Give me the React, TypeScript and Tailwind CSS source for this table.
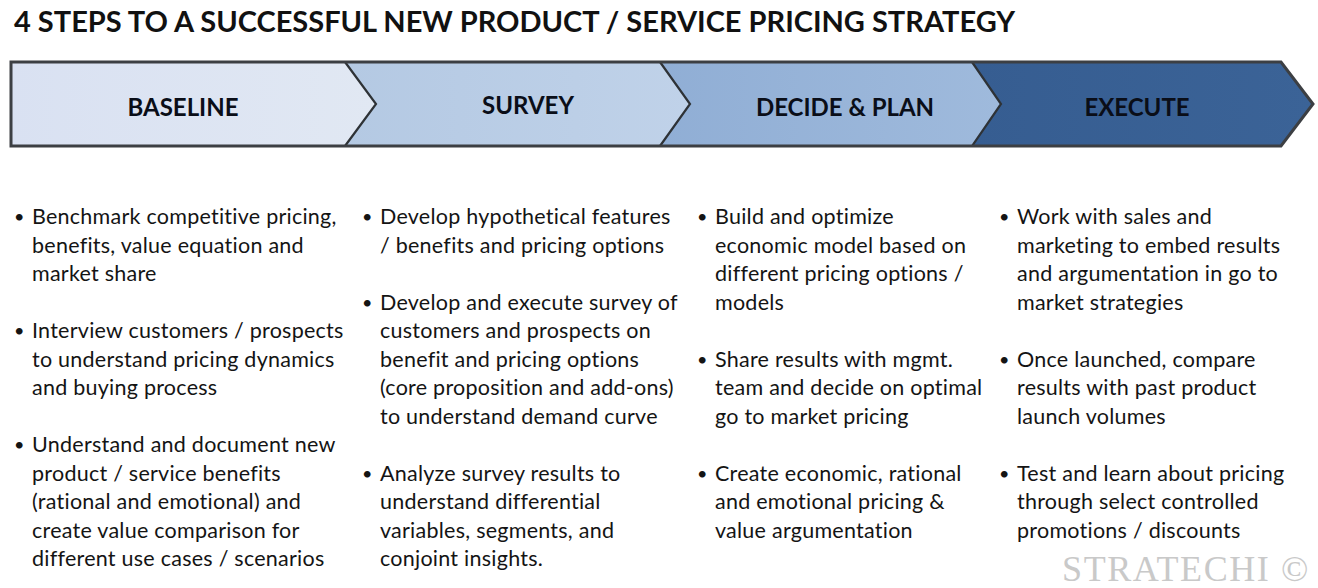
const steps = [
  { label: "BASELINE", width: "w-[344px]", pt: "pt-[3px]" },
  { label: "SURVEY", width: "w-[346px]", pt: "pt-0" },
  { label: "DECIDE & PLAN", width: "w-[288px]", pt: "pt-[4px]" },
  { label: "EXECUTE", width: "w-[296px]", pt: "pt-[4px]" },
];

const columns: string[][][] = [
  [
    ["Benchmark competitive pricing,", "benefits, value equation and", "market share"],
    ["Interview customers / prospects", "to understand pricing dynamics", "and buying process"],
    [
      "Understand and document new",
      "product / service benefits",
      "(rational and emotional) and",
      "create value comparison for",
      "different use cases / scenarios",
    ],
  ],
  [
    ["Develop hypothetical features", "/ benefits and pricing options"],
    [
      "Develop and execute survey of",
      "customers and prospects on",
      "benefit and pricing options",
      "(core proposition and add-ons)",
      "to understand demand curve",
    ],
    ["Analyze survey results to", "understand differential", "variables, segments, and", "conjoint insights."],
  ],
  [
    ["Build and optimize", "economic model based on", "different pricing options /", "models"],
    ["Share results with mgmt.", "team and decide on optimal", "go to market pricing"],
    ["Create economic, rational", "and emotional pricing &", "value argumentation"],
  ],
  [
    ["Work with sales and", "marketing to embed results", "and argumentation in go to", "market strategies"],
    ["Once launched, compare", "results with past product", "launch volumes"],
    ["Test and learn about pricing", "through select controlled", "promotions / discounts"],
  ],
];

const ChevronBar = () => (
  <div className="relative h-[90px] w-full">
    <svg className="absolute inset-0" width="1318" height="90" viewBox="0 0 1318 90">
      <defs>
        <linearGradient id="g1" x1="0" y1="0" x2="1" y2="0">
          <stop offset="0" stopColor="#d9e1f2" />
          <stop offset="1" stopColor="#e1e8f3" />
        </linearGradient>
        <linearGradient id="g2" x1="0" y1="0" x2="1" y2="0">
          <stop offset="0" stopColor="#b4c9e3" />
          <stop offset="1" stopColor="#c0d2e9" />
        </linearGradient>
        <linearGradient id="g3" x1="0" y1="0" x2="1" y2="0">
          <stop offset="0" stopColor="#90aed5" />
          <stop offset="1" stopColor="#9fbadc" />
        </linearGradient>
        <linearGradient id="g4" x1="0" y1="0" x2="1" y2="0">
          <stop offset="0" stopColor="#365d91" />
          <stop offset="1" stopColor="#3b6397" />
        </linearGradient>
      </defs>
      <polygon points="11,2 345,2 376,44 345,86 11,86" fill="url(#g1)" />
      <polygon points="345,2 660,2 690,44 660,86 345,86 376,44" fill="url(#g2)" />
      <polygon points="660,2 972,2 1001,44 972,86 660,86 690,44" fill="url(#g3)" />
      <polygon points="972,2 1281,2 1313,44 1281,86 972,86 1001,44" fill="url(#g4)" />
      <polyline points="345,2 376,44 345,86" fill="none" stroke="#2e3236" strokeWidth="2.2" />
      <polyline points="660,2 690,44 660,86" fill="none" stroke="#2e3236" strokeWidth="2.2" />
      <polyline points="972,2 1001,44 972,86" fill="none" stroke="#2e3236" strokeWidth="2.2" />
      <path
        d="M11 2 L1281 2 L1313 44 L1281 86 L11 86 Z"
        fill="none"
        stroke="#3c3f43"
        strokeWidth="3"
        strokeLinejoin="miter"
      />
    </svg>
    <div className="relative flex h-full pl-[11px]">
      {steps.map((s) => (
        <div
          key={s.label}
          className={`${s.width} ${s.pt} flex items-center justify-center text-[24px] font-bold text-[#0a0e18]`}
        >
          {s.label}
        </div>
      ))}
    </div>
  </div>
);

export default function App() {
  return (
    <div
      className="relative h-[588px] w-[1318px] overflow-hidden bg-white text-[#141414]"
      style={{ fontFamily: "Lato, 'Noto Sans', sans-serif" }}
    >
      <h1 className="pl-[14px] pt-[3px] text-[29px] font-bold leading-[36px] text-[#111]">
        4 STEPS TO A SUCCESSFUL NEW PRODUCT / SERVICE PRICING STRATEGY
      </h1>

      <div className="mt-[21px]">
        <ChevronBar />
      </div>

      <div className="mt-[52px] grid grid-cols-[348px_335px_302px_319px] pl-[14px] text-[21.5px] leading-[28.5px] tracking-[0.25px]">
        {columns.map((col, ci) => (
          <div key={ci} className="flex flex-col gap-[28.5px]">
            {col.map((lines, pi) => (
              <div key={pi} className="flex">
                <span className="w-[18px] shrink-0 text-[18px]">•</span>
                <p className="whitespace-nowrap">
                  {lines.map((l, li) => (
                    <span key={li} className="block">
                      {l}
                    </span>
                  ))}
                </p>
              </div>
            ))}
          </div>
        ))}
      </div>

      <div
        className="absolute bottom-[1px] right-[8px] text-[36px] leading-none tracking-[1.6px] text-[#c9c9c9]"
        style={{ fontFamily: "'Liberation Serif', serif" }}
      >
        STRATECHI ©
      </div>
    </div>
  );
}
